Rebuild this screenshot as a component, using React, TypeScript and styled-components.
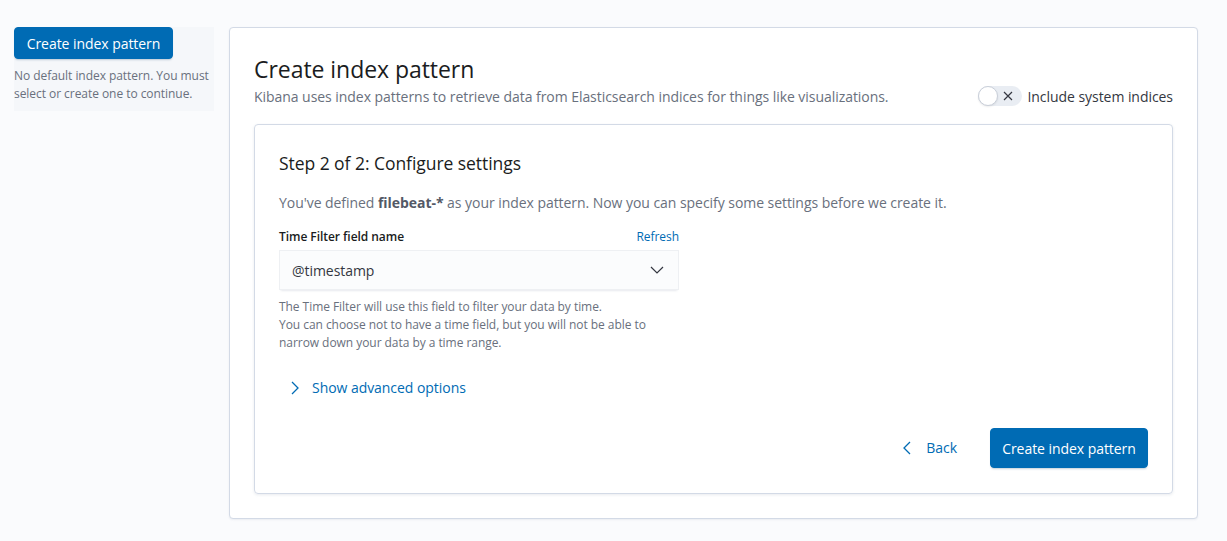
import * as React from 'react';
import styled, { createGlobalStyle } from 'styled-components';

const GlobalStyle = createGlobalStyle`
  html, body {
    margin: 0;
    padding: 0;
    background: #fafbfd;
    font-family: "Open Sans", "Liberation Sans", sans-serif;
    letter-spacing: -0.05px;
    -webkit-font-smoothing: antialiased;
  }
`;

const Page = styled.div`
  display: flex;
  align-items: flex-start;
  gap: 15px;
  padding: 27px 29px 22px 14px;
  min-height: 541px;
  box-sizing: border-box;
`;

const Sidebar = styled.aside`
  width: 200px;
  flex-shrink: 0;
  background: #f5f7fa;
  padding-bottom: 8px;
`;

const Button = styled.button<{ $width: number; $height: number }>`
  display: block;
  font-family: inherit;
  font-size: 14px;
  letter-spacing: inherit;
  color: #fff;
  background: #006bb4;
  border: 1px solid #006bb4;
  border-radius: 4px;
  width: ${p => p.$width}px;
  height: ${p => p.$height}px;
  padding: 0;
  box-shadow: 0 2px 2px -1px rgba(54, 97, 126, 0.3);
  cursor: pointer;
`;

const SidebarNote = styled.p`
  margin: 8px 0 0;
  font-size: 12px;
  line-height: 18px;
  color: #69707d;
`;

const Panel = styled.main`
  flex: 1;
  background: #fff;
  border: 1px solid #d3dae6;
  border-radius: 4px;
  box-shadow: 0 1px 2px rgba(152, 162, 179, 0.15);
  padding: 24px;
`;

const Header = styled.div`
  display: flex;
  align-items: flex-end;
  justify-content: space-between;
  margin-top: 1px;
  margin-bottom: 17px;
`;

const Title = styled.h1`
  margin: 0;
  font-size: 23px;
  line-height: 32px;
  font-weight: 400;
  color: #1a1c21;
`;

const Subtitle = styled.p`
  margin: 2px 0 0;
  font-size: 14px;
  line-height: 20px;
  color: #69707d;
`;

const SwitchRow = styled.label`
  display: flex;
  align-items: center;
  gap: 5px;
  font-size: 14px;
  color: #343741;
  margin-bottom: 1px;
`;

const SwitchTrack = styled.span`
  position: relative;
  display: inline-block;
  width: 44px;
  height: 20px;
  border-radius: 10px;
  background: #e9edf3;
`;

const SwitchThumb = styled.span`
  position: absolute;
  left: 0;
  top: 0;
  width: 18px;
  height: 18px;
  border-radius: 50%;
  background: #fff;
  border: 1px solid #c9cfd9;
  box-shadow: 0 1px 2px rgba(0, 0, 0, 0.08);
`;

const SwitchIcon = styled.svg`
  position: absolute;
  right: 9px;
  top: 5px;
`;

const Card = styled.section`
  border: 1px solid #d3dae6;
  border-radius: 4px;
  box-shadow: 0 1px 3px rgba(152, 162, 179, 0.2);
  padding: 24px 24px 25px;
`;

const StepTitle = styled.h2`
  margin: 0 0 16px;
  font-size: 17.5px;
  line-height: 28px;
  font-weight: 500;
  color: #1a1c21;
`;

const Description = styled.p`
  margin: 0 0 15px;
  font-size: 14px;
  line-height: 20px;
  color: #69707d;

  strong {
    font-weight: 700;
    color: #535966;
  }
`;

const Field = styled.div`
  width: 400px;
`;

const LabelRow = styled.div`
  display: flex;
  justify-content: space-between;
  align-items: baseline;
  margin-bottom: 4px;
`;

const Label = styled.span`
  font-size: 12px;
  line-height: 18px;
  font-weight: 600;
  color: #1a1c21;
`;

const TextLink = styled.a`
  font-size: 12px;
  line-height: 18px;
  color: #006bb4;
  text-decoration: none;
`;

const Select = styled.div`
  display: flex;
  align-items: center;
  justify-content: space-between;
  height: 40px;
  box-sizing: border-box;
  padding: 0 14px 0 12px;
  background: #fbfcfd;
  border: 1px solid #eef0f3;
  box-shadow: 0 1px 1px -1px rgba(152, 162, 179, 0.2), 0 3px 2px -2px rgba(152, 162, 179, 0.2);
  font-size: 14px;
  color: #343741;
`;

const Help = styled.p`
  margin: 8px 0 0;
  font-size: 12px;
  line-height: 18px;
  color: #69707d;
`;

const LinkButton = styled.a<{ $gap: number }>`
  display: inline-flex;
  align-items: center;
  gap: ${p => p.$gap}px;
  font-size: 14px;
  line-height: 20px;
  color: #006bb4;
  text-decoration: none;
`;

const Advanced = styled.div`
  margin-top: 26px;
  padding-left: 12px;
`;

const Footer = styled.div`
  display: flex;
  justify-content: flex-end;
  align-items: center;
  gap: 33px;
  margin-top: 28px;
`;

const Chevron = ({ dir }: { dir: 'right' | 'left' | 'down' }) => {
  if (dir === 'down') {
    return (
      <svg width="14" height="8" viewBox="0 0 14 8" fill="none">
        <path d="M1 1l6 6 6-6" stroke="#343741" strokeWidth="1.2" />
      </svg>
    );
  }
  const d = dir === 'right' ? 'M1 1l6 6-6 6' : 'M7 1L1 7l6 6';
  return (
    <svg width="8" height="14" viewBox="0 0 8 14" fill="none">
      <path d={d} stroke="#006bb4" strokeWidth="1.3" />
    </svg>
  );
};

export default function App() {
  return (
    <>
      <GlobalStyle />
      <Page>
        <Sidebar>
          <Button $width={159} $height={32}>Create index pattern</Button>
          <SidebarNote>
            No default index pattern. You must select or create one to continue.
          </SidebarNote>
        </Sidebar>

        <Panel>
          <Header>
            <div>
              <Title>Create index pattern</Title>
              <Subtitle>
                Kibana uses index patterns to retrieve data from Elasticsearch indices for things like visualizations.
              </Subtitle>
            </div>
            <SwitchRow>
              <SwitchTrack>
                <SwitchThumb />
                <SwitchIcon width="10" height="10" viewBox="0 0 10 10">
                  <path d="M1 1l8 8M9 1l-8 8" stroke="#343741" strokeWidth="1.2" />
                </SwitchIcon>
              </SwitchTrack>
              Include system indices
            </SwitchRow>
          </Header>

          <Card>
            <StepTitle>Step 2 of 2: Configure settings</StepTitle>
            <Description>
              You've defined <strong>filebeat-*</strong> as your index pattern. Now you can specify some settings before we create it.
            </Description>

            <Field>
              <LabelRow>
                <Label>Time Filter field name</Label>
                <TextLink href="#">Refresh</TextLink>
              </LabelRow>
              <Select>
                @timestamp
                <Chevron dir="down" />
              </Select>
              <Help>
                The Time Filter will use this field to filter your data by time.
                <br />
                You can choose not to have a time field, but you will not be able to narrow down your data by a time range.
              </Help>
            </Field>

            <Advanced>
              <LinkButton href="#" $gap={13}>
                <Chevron dir="right" />
                Show advanced options
              </LinkButton>
            </Advanced>

            <Footer>
              <LinkButton href="#" $gap={15}>
                <Chevron dir="left" />
                Back
              </LinkButton>
              <Button $width={158} $height={40}>Create index pattern</Button>
            </Footer>
          </Card>
        </Panel>
      </Page>
    </>
  );
}
